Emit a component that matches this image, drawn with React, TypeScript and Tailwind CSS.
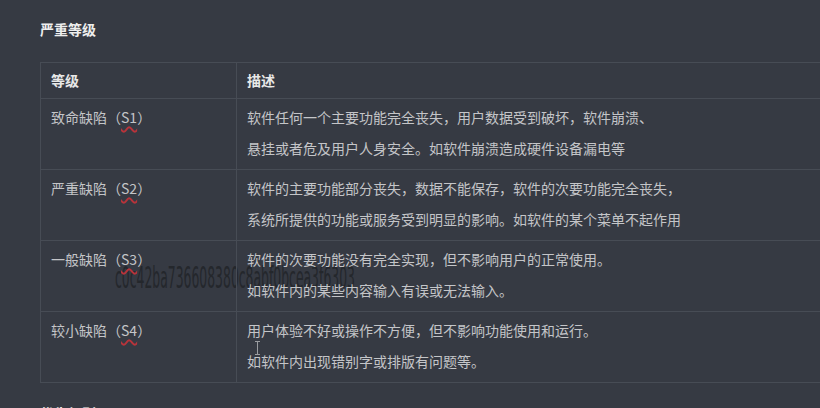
import React from 'react';

type Row = { level: string; code: string; lines: string[] };

const rows: Row[] = [
  {
    level: '致命缺陷',
    code: 'S1',
    lines: [
      '软件任何一个主要功能完全丧失，用户数据受到破坏，软件崩溃、',
      '悬挂或者危及用户人身安全。如软件崩溃造成硬件设备漏电等',
    ],
  },
  {
    level: '严重缺陷',
    code: 'S2',
    lines: [
      '软件的主要功能部分丧失，数据不能保存，软件的次要功能完全丧失，',
      '系统所提供的功能或服务受到明显的影响。如软件的某个菜单不起作用',
    ],
  },
  {
    level: '一般缺陷',
    code: 'S3',
    lines: ['软件的次要功能没有完全实现，但不影响用户的正常使用。', '如软件内的某些内容输入有误或无法输入。'],
  },
  {
    level: '较小缺陷',
    code: 'S4',
    lines: ['用户体验不好或操作不方便，但不影响功能使用和运行。', '如软件内出现错别字或排版有问题等。'],
  },
];

export default function App() {
  return (
    <div
      className="relative h-[408px] w-[820px] overflow-hidden bg-[#363a43] pl-[40px] pt-[19px] text-[14px] text-[#c4c5c8]"
      style={{ fontFamily: '"Noto Sans CJK SC", "Noto Sans", sans-serif' }}
    >
      {/* watermark, sits under the table text */}
      <div
        className="pointer-events-none absolute left-[115px] top-[258px] origin-left scale-x-[0.4] whitespace-nowrap text-[31px] leading-[38px] text-[#24272c]"
        style={{ fontFamily: '"DejaVu Sans", sans-serif' }}
      >
        c0c42ba736608380c8abf0bcea3f6303
      </div>

      {/* section title */}
      <h2 className="relative h-[21px] text-[14px] font-bold leading-[21px] text-[#eeeeee]">严重等级</h2>

      <div className="relative mt-[22px] w-[820px] border-l border-t border-[#474c55]">
        {/* header */}
        <div className="flex h-[36px] border-b border-[#474c55] font-bold text-[#e8e8e8]">
          <div className="flex w-[196px] items-center border-r border-[#474c55] pl-[10px]">等级</div>
          <div className="flex flex-1 items-center pl-[10px]">描述</div>
        </div>

        {rows.map((r) => (
          <div key={r.code} className="flex h-[71px] border-b border-[#474c55]">
            <div className="w-[196px] border-r border-[#474c55] pl-[10px] pt-[3px] leading-[31px]">
              {r.level}（
              <span className="underline decoration-[#b8333a] decoration-wavy decoration-[1.5px] underline-offset-[3px]">
                {r.code}
              </span>
              ）
            </div>
            <div className="flex-1 pl-[10px] pt-[3px] leading-[31px]">
              {r.lines.map((l) => (
                <p key={l}>{l}</p>
              ))}
            </div>
          </div>
        ))}
      </div>

      <h2 className="relative mt-[20px] text-[14px] font-bold leading-[21px] text-[#eeeeee]">优先级别</h2>

      {/* text cursor */}
      <div className="pointer-events-none absolute left-[255px] top-[341px] flex h-[14px] w-[5px] flex-col items-center">
        <div className="h-px w-[5px] bg-[#9a9ca0]" />
        <div className="w-px flex-1 bg-[#9a9ca0]" />
        <div className="h-px w-[5px] bg-[#9a9ca0]" />
      </div>
    </div>
  );
}
